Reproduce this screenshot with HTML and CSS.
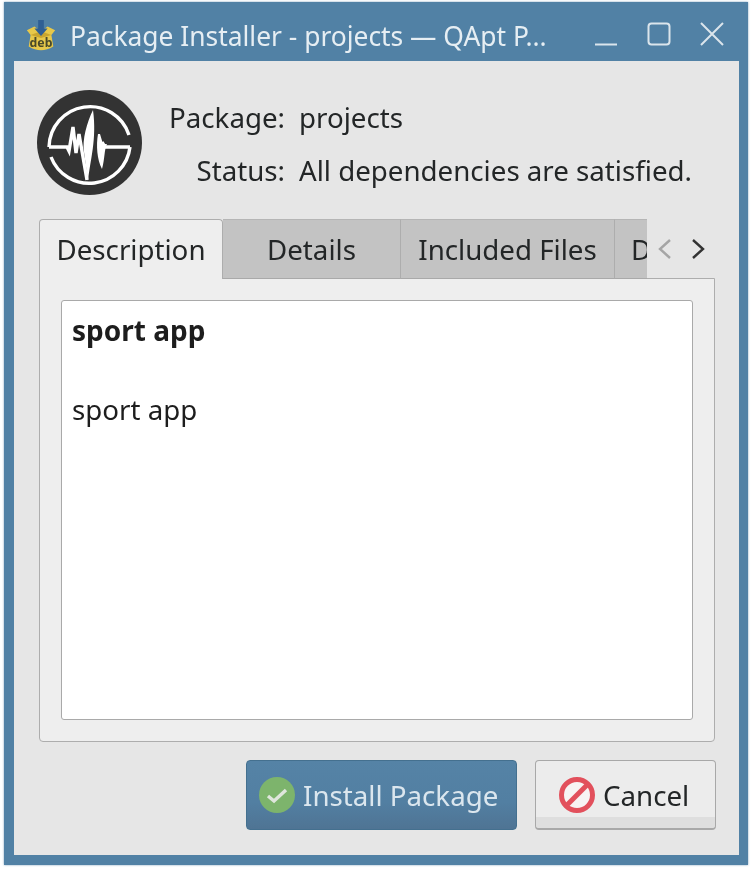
FILE: index.html
```html
<!DOCTYPE html>
<html lang="en">
<head>
    <meta charset="UTF-8">
    <meta name="viewport" content="width=device-width, initial-scale=1.0">
    <title>Package Installer</title>
    <link rel="stylesheet" href="styles.css">
</head>
<body>

<div class="window">

    <!-- Title bar -->
    <div class="titlebar">
        <svg class="app-icon" viewBox="0 0 36 36">
            <path d="M3 12 L11 8 L18 13 L25 8 L33 12 L29 17 L31 29 Q18 37 5 29 L7 17 Z" fill="#e7c84a"/>
            <path d="M7 17 L18 13 L29 17 L18 20 Z" fill="#c9a52e"/>
            <path d="M15 1 H21 V10 H25 L18 18 L11 10 H15 Z" fill="#2f5f94"/>
            <text class="deb-text" x="18" y="30" text-anchor="middle">deb</text>
        </svg>
        <span class="window-title">Package Installer - projects — QApt P...</span>
        <div class="window-buttons">
            <svg viewBox="0 0 26 26"><path d="M2 23.5 H24"/></svg>
            <svg viewBox="0 0 26 26"><rect x="2.5" y="2.5" width="21" height="21" rx="3"/></svg>
            <svg viewBox="0 0 26 26"><path d="M2 2 L24 24 M24 2 L2 24"/></svg>
        </div>
    </div>

    <div class="content">

        <!-- Package info -->
        <div class="info-row">
            <svg class="logo" viewBox="0 0 105 105">
                <circle cx="52.5" cy="52.5" r="52.5" fill="#333333"/>
                <path class="logo-line" d="M12 57 A41 41 0 0 1 92 45"/>
                <path class="logo-line" d="M14 67 A41 41 0 0 0 93 57"/>
                <path class="logo-line" d="M12 57 H30 L32 61 L36 37 L39 63 L42 44 L50 90"/>
                <path class="logo-line" d="M65 52 L68 57 H93"/>
                <path d="M56 20 C50 32 45 50 47 62 L51 91 C53 70 60 50 56 20 Z" fill="#ffffff"/>
                <path d="M61 44 C59 55 60 70 65 79 C68 68 67 60 70 54 H66 L63 44 Z" fill="#ffffff"/>
            </svg>
            <div class="info-grid">
                <span class="info-label">Package:</span>
                <span>projects</span>
                <span class="info-label">Status:</span>
                <span>All dependencies are satisfied.</span>
            </div>
        </div>

        <!-- Tabs -->
        <div class="tab-bar">
            <div class="tabs">
                <div class="tab active">Description</div>
                <div class="tab tab-details">Details</div>
                <div class="tab tab-files">Included Files</div>
                <div class="tab tab-cut">D</div>
            </div>
            <div class="tab-arrows">
                <svg class="arrow-off" viewBox="0 0 14 22"><path d="M12 2 L2 11 L12 20"/></svg>
                <svg viewBox="0 0 14 22"><path d="M2 2 L12 11 L2 20"/></svg>
            </div>
        </div>

        <div class="tab-panel">
            <div class="text-box">
                <p class="bold-text">sport app</p>
                <p class="blank-line"></p>
                <p>sport app</p>
            </div>
        </div>

        <!-- Buttons -->
        <div class="button-row">
            <button class="btn btn-install">
                <svg class="btn-icon" viewBox="0 0 36 36">
                    <circle cx="18" cy="18" r="18" fill="#7db46c"/>
                    <path d="M9 19 L15 24 L27 13" fill="none" stroke="#dfe6dc" stroke-width="3.4"/>
                </svg>
                Install Package
            </button>
            <button class="btn btn-cancel">
                <svg class="btn-icon" viewBox="0 0 36 36">
                    <circle cx="18" cy="18" r="15.5" fill="#f7f3f3" stroke="#e2505c" stroke-width="5"/>
                    <path d="M7 29 L29 7" stroke="#e2505c" stroke-width="5"/>
                </svg>
                Cancel
            </button>
        </div>

    </div>
</div>

</body>
</html>
```

FILE: styles.css
```css
/* General */
* {
    box-sizing: border-box;
}

body {
    margin: 0;
    padding: 2px 4px 7px;
    height: 872px;
    overflow: hidden;
    background-color: #ffffff;
    font-family: "Noto Sans", sans-serif;
    font-size: 27.7px;
    color: #232627;
}

.window {
    height: 863px;
    padding: 0 9px 10px 10px;
    background-color: #5181a5;
    display: flex;
    flex-direction: column;
    box-shadow: 0 0 2px #7fa3bf;
    filter: blur(0.6px); /* reference is an upscaled, soft capture */
}

/* Title bar */
.titlebar {
    height: 59px;
    flex-shrink: 0;
    display: flex;
    align-items: center;
    color: #e6eef3;
    padding-top: 9px;
}

.app-icon {
    width: 34px;
    height: 36px;
    margin-left: 10px;
    flex-shrink: 0;
}

.deb-text {
    font-family: "Noto Sans", sans-serif;
    font-size: 13px;
    font-weight: bold;
    fill: #4a4a2a;
}

.window-title {
    margin-left: 12px;
    white-space: nowrap;
    font-size: 26.4px;
}

.window-buttons {
    margin-left: auto;
    display: flex;
    gap: 27px;
    padding-right: 14px;
    margin-top: -4px;
}

.window-buttons svg {
    width: 26px;
    height: 26px;
    fill: none;
    stroke: #dbe5ec;
    stroke-width: 2;
}

/* Content */
.content {
    flex: 1;
    background-color: #e6e6e6;
    padding: 29px 24px 25px 23px;
    display: flex;
    flex-direction: column;
}

.info-row {
    display: flex;
    align-items: flex-start;
    height: 129px;
    flex-shrink: 0;
}

.logo {
    width: 105px;
    height: 105px;
    flex-shrink: 0;
}

.logo-line {
    fill: none;
    stroke: #ffffff;
    stroke-width: 3.4;
}

.info-grid {
    margin-left: 27px;
    padding-top: 9px;
    display: grid;
    grid-template-columns: 116px auto;
    column-gap: 14px;
    row-gap: 17px;
    line-height: 36px;
    white-space: nowrap;
}

.info-label {
    text-align: right;
}

/* Tabs */
.tab-bar {
    display: flex;
    height: 60px;
    margin: 0 0 -1px 2px;
    flex-shrink: 0;
    position: relative;
    z-index: 1;
}

.tabs {
    width: 608px;
    display: flex;
    overflow: hidden;
    flex-shrink: 0;
}

.tab {
    flex-shrink: 0;
    height: 60px;
    background-color: #c3c3c3;
    border-right: 1px solid #adadad;
    border-top: 1px solid #b5b5b5;
    border-bottom: 1px solid #a9a9a9;
    text-align: center;
    line-height: 59px;
    white-space: nowrap;
}

.tab.active {
    width: 184px;
    background-color: #eeeeee;
    border: 1px solid #adadad;
    border-bottom: none;
    border-radius: 4px 4px 0 0;
}

.tab-details {
    width: 178px;
}

.tab-files {
    width: 214px;
}

.tab-cut {
    width: 32px;
    padding-left: 16px;
    text-align: left;
    border-right: none;
}

.tab-arrows {
    display: flex;
    align-items: center;
    gap: 19px;
    padding: 0 0 0 11px;
}

.tab-arrows svg {
    width: 14px;
    height: 22px;
    fill: none;
    stroke: #333333;
    stroke-width: 2.4;
}

.tab-arrows .arrow-off {
    stroke: #a5a5a5;
}

.tab-panel {
    height: 464px;
    margin-left: 2px;
    flex-shrink: 0;
    padding: 21px;
    background-color: #eeeeee;
    border: 1px solid #adadad;
    border-radius: 0 0 4px 4px;
}

.text-box {
    height: 100%;
    padding: 10px 10px;
    background-color: #ffffff;
    border: 1px solid #a9a9a9;
    border-radius: 3px;
    line-height: 39.5px;
    color: #1d1d1d;
}

.text-box p {
    margin: 0;
}

.text-box .blank-line {
    height: 39.5px;
}

.text-box .bold-text {
    font-weight: bold;
    font-size: 28px;
}

/* Buttons */
.button-row {
    display: flex;
    justify-content: flex-end;
    gap: 18px;
    margin: 18px -1px 0 0;
}

.btn {
    height: 70px;
    display: flex;
    align-items: center;
    font-family: inherit;
    font-size: 27.7px;
    border-radius: 4px;
    padding: 0;
}

.btn-icon {
    width: 36px;
    height: 36px;
    flex-shrink: 0;
}

.btn-install {
    width: 271px;
    gap: 8px;
    padding-left: 12px;
    color: #dbe6ee;
    background: linear-gradient(#5583a6 0%, #527fa2 60%, #4f7494 100%);
    border: 1px solid #44708f;
}

.btn-cancel {
    width: 181px;
    gap: 8px;
    padding-left: 23px;
    color: #232627;
    background: linear-gradient(#ececec 0%, #ececec 84%, #dedede 84%, #dedede 100%);
    border: 1px solid #a8a8a8;
    border-bottom-width: 2px;
}
```
